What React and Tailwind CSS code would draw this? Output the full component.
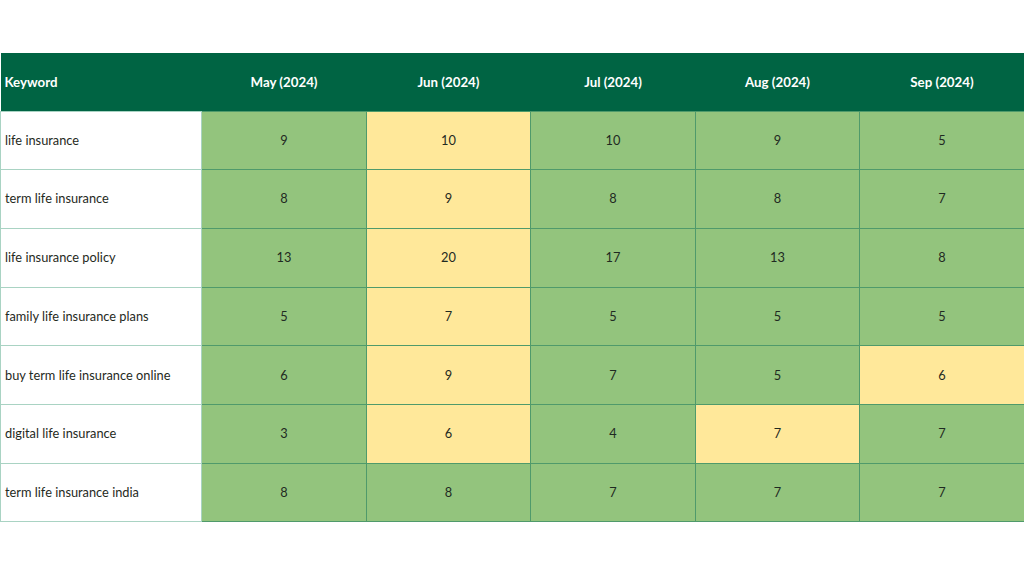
import React from "react";

const months = ["May (2024)", "Jun (2024)", "Jul (2024)", "Aug (2024)", "Sep (2024)"];
const rows = [
  ["life insurance", [9, 10, 10, 9, 5], [0, 1, 0, 0, 0]],
  ["term life insurance", [8, 9, 8, 8, 7], [0, 1, 0, 0, 0]],
  ["life insurance policy", [13, 20, 17, 13, 8], [0, 1, 0, 0, 0]],
  ["family life insurance plans", [5, 7, 5, 5, 5], [0, 1, 0, 0, 0]],
  ["buy term life insurance online", [6, 9, 7, 5, 6], [0, 1, 0, 0, 1]],
  ["digital life insurance", [3, 6, 4, 7, 7], [0, 1, 0, 1, 0]],
  ["term life insurance india", [8, 8, 7, 7, 7], [0, 0, 0, 0, 0]],
];

export default function App() {
  return (
    <div className="w-[1024px] h-[576px] bg-white pt-[53px]" style={{ fontFamily: "Lato, 'Noto Sans', sans-serif" }}>
      <table className="w-[1024px] border-collapse table-fixed text-[12.8px] text-[#1f2a22]">
        <colgroup>
          <col className="w-[201px]" />
          <col className="w-[165px]" />
          <col className="w-[164px]" />
          <col className="w-[165px]" />
          <col className="w-[164px]" />
          <col className="w-[165px]" />
        </colgroup>
        <thead>
          <tr className="h-[58px] bg-[#006443] text-white">
            <th className="text-left font-bold pl-[4px] pt-[3px] text-[13.3px]">Keyword</th>
            {months.map((m) => (
              <th key={m} className="text-center font-bold pt-[3px] text-[13.3px]">{m}</th>
            ))}
          </tr>
        </thead>
        <tbody>
          {rows.map(([kw, vals, ys]) => (
            <tr key={kw} className="h-[58.7px]">
              <td className="bg-white border border-[#a9d3c3] pl-[4px]">{kw}</td>
              {vals.map((v, i) => (
                <td
                  key={i}
                  className={
                    "text-center border border-[#4f9a6b] " +
                    (ys[i] ? "bg-[#ffe89a]" : "bg-[#93c47d]")
                  }
                >
                  {v}
                </td>
              ))}
            </tr>
          ))}
        </tbody>
      </table>
    </div>
  );
}
